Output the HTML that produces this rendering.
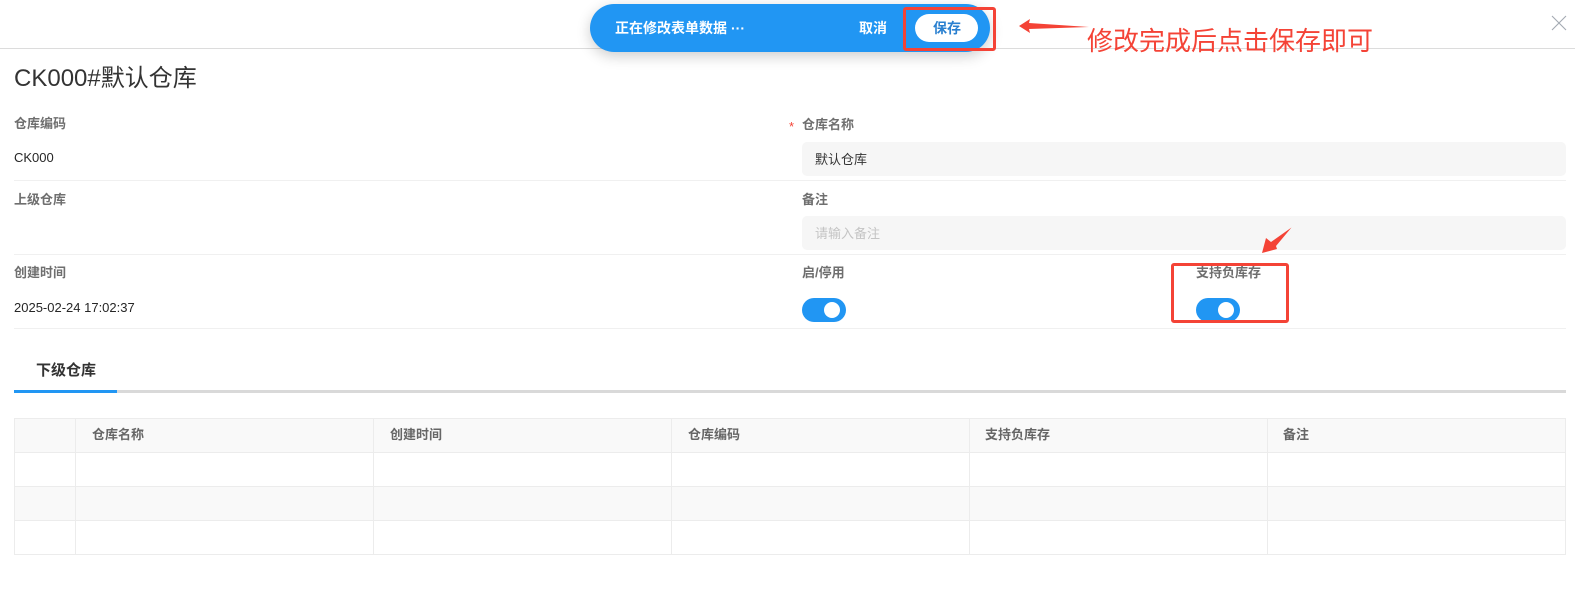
<!DOCTYPE html>
<html lang="zh">
<head>
<meta charset="utf-8">
<style>
html,body{margin:0;padding:0;background:#fff}
body{width:1575px;height:602px;position:relative;overflow:hidden;font-family:"Liberation Sans","Noto Sans CJK SC",sans-serif;color:#262626}
.a{position:absolute;white-space:nowrap;line-height:1}
.l{font-size:13px;font-weight:700;color:#6f6f6f}
.v{font-size:13px;color:#262626}
.h{position:absolute;height:1px;background:#f0f0f0}
.inp{position:absolute;left:802px;width:764px;height:34px;background:#f6f6f6;border-radius:5px}
.sw{position:absolute;width:44px;height:24px;border-radius:12px;background:#2196f3}
.sw i{position:absolute;left:22px;top:4px;width:16px;height:16px;border-radius:50%;background:#fff}
.th{font-size:13px;font-weight:700;color:#666}
.vl{position:absolute;top:418px;width:1px;height:137px;background:#ececec}
.hl{position:absolute;left:14px;width:1552px;height:1px;background:#ececec}
.r{position:absolute;left:14px;width:1552px;height:33px;background:#f9f9f9}
</style>
</head>
<body>
<div class="h" style="left:0;top:48px;width:1575px;background:#dcdcdc"></div>

<svg class="a" style="left:1551px;top:15px" width="16" height="16" viewBox="0 0 16 16"><path d="M1 1L15 15M15 1L1 15" stroke="#a3aab2" stroke-width="1.1" fill="none"/></svg>

<div class="a" style="left:590px;top:4px;width:400px;height:48px;border-radius:24px;background:#2196f3;box-shadow:0 4px 14px rgba(0,0,0,.2)"></div>
<div class="a" style="left:615px;top:21px;font-size:14px;font-weight:700;color:#fff">正在修改表单数据</div>
<div class="a" style="left:731px;top:21px;font-size:14px;font-weight:700;color:#fff">···</div>
<div class="a" style="left:859px;top:21px;font-size:14px;font-weight:700;color:#fff">取消</div>
<div class="a" style="left:915px;top:14px;width:63px;height:28px;border-radius:14px;background:#fff"></div>
<div class="a" style="left:933px;top:21px;font-size:14px;font-weight:700;color:#2a80d0">保存</div>
<div class="a" style="left:903px;top:7px;width:87px;height:38px;border:3px solid #f44336;border-radius:3px"></div>

<svg class="a" style="left:1015px;top:15px" width="76" height="20" viewBox="0 0 76 20"><path d="M4 11L15 4L14 8L74 12L14 14L15 18Z" fill="#f44336"/></svg>
<div class="a" style="left:1087px;top:28px;font-size:26px;color:#f44336;background:transparent">修改完成后点击保存即可</div>

<div class="a" style="left:14px;top:67px;font-size:24px;color:#333">CK000#默认仓库</div>

<div class="a l" style="left:14px;top:117px">仓库编码</div>
<div class="a v" style="left:14px;top:151px">CK000</div>
<div class="a l" style="left:14px;top:193px">上级仓库</div>
<div class="a l" style="left:14px;top:266px">创建时间</div>
<div class="a v" style="left:14px;top:301px">2025-02-24 17:02:37</div>

<div class="h" style="left:14px;top:180px;width:1552px"></div>
<div class="h" style="left:14px;top:254px;width:1552px"></div>
<div class="h" style="left:14px;top:328px;width:1552px"></div>

<div class="a" style="left:789px;top:120px;font-size:13px;color:#f44336">*</div>
<div class="a l" style="left:802px;top:118px">仓库名称</div>
<div class="inp" style="top:142px"></div>
<div class="a" style="left:815px;top:153px;font-size:13px;color:#333">默认仓库</div>
<div class="a l" style="left:802px;top:193px">备注</div>
<div class="inp" style="top:216px"></div>
<div class="a" style="left:815px;top:227px;font-size:13px;color:#c4c4c4">请输入备注</div>
<div class="a l" style="left:802px;top:266px">启/停用</div>
<div class="sw" style="left:802px;top:298px"><i></i></div>
<div class="a l" style="left:1196px;top:266px">支持负库存</div>
<div class="sw" style="left:1196px;top:298px"><i></i></div>

<div class="a" style="left:1171px;top:263px;width:112px;height:54px;border:3px solid #f44336;border-radius:3px"></div>
<svg class="a" style="left:1255px;top:224px" width="40" height="32" viewBox="0 0 40 32"><path d="M7 29L11 14L16 18L36.5 3.5L21 22L22 25Z" fill="#f44336"/></svg>

<div class="a" style="left:36px;top:363px;font-size:15px;font-weight:700;color:#333">下级仓库</div>
<div class="h" style="left:14px;top:390px;width:1552px;height:3px;background:#d9d9d9"></div>
<div class="h" style="left:14px;top:390px;width:103px;height:3px;background:#2196f3"></div>

<div class="r" style="top:419px"></div>
<div class="r" style="top:487px"></div>
<div class="hl" style="top:418px"></div>
<div class="hl" style="top:452px"></div>
<div class="hl" style="top:486px"></div>
<div class="hl" style="top:520px"></div>
<div class="hl" style="top:554px"></div>
<div class="vl" style="left:14px"></div>
<div class="vl" style="left:75px"></div>
<div class="vl" style="left:373px"></div>
<div class="vl" style="left:671px"></div>
<div class="vl" style="left:969px"></div>
<div class="vl" style="left:1267px"></div>
<div class="vl" style="left:1565px"></div>

<div class="a th" style="left:92px;top:428px">仓库名称</div>
<div class="a th" style="left:390px;top:428px">创建时间</div>
<div class="a th" style="left:688px;top:428px">仓库编码</div>
<div class="a th" style="left:985px;top:428px">支持负库存</div>
<div class="a th" style="left:1283px;top:428px">备注</div>
</body>
</html>
